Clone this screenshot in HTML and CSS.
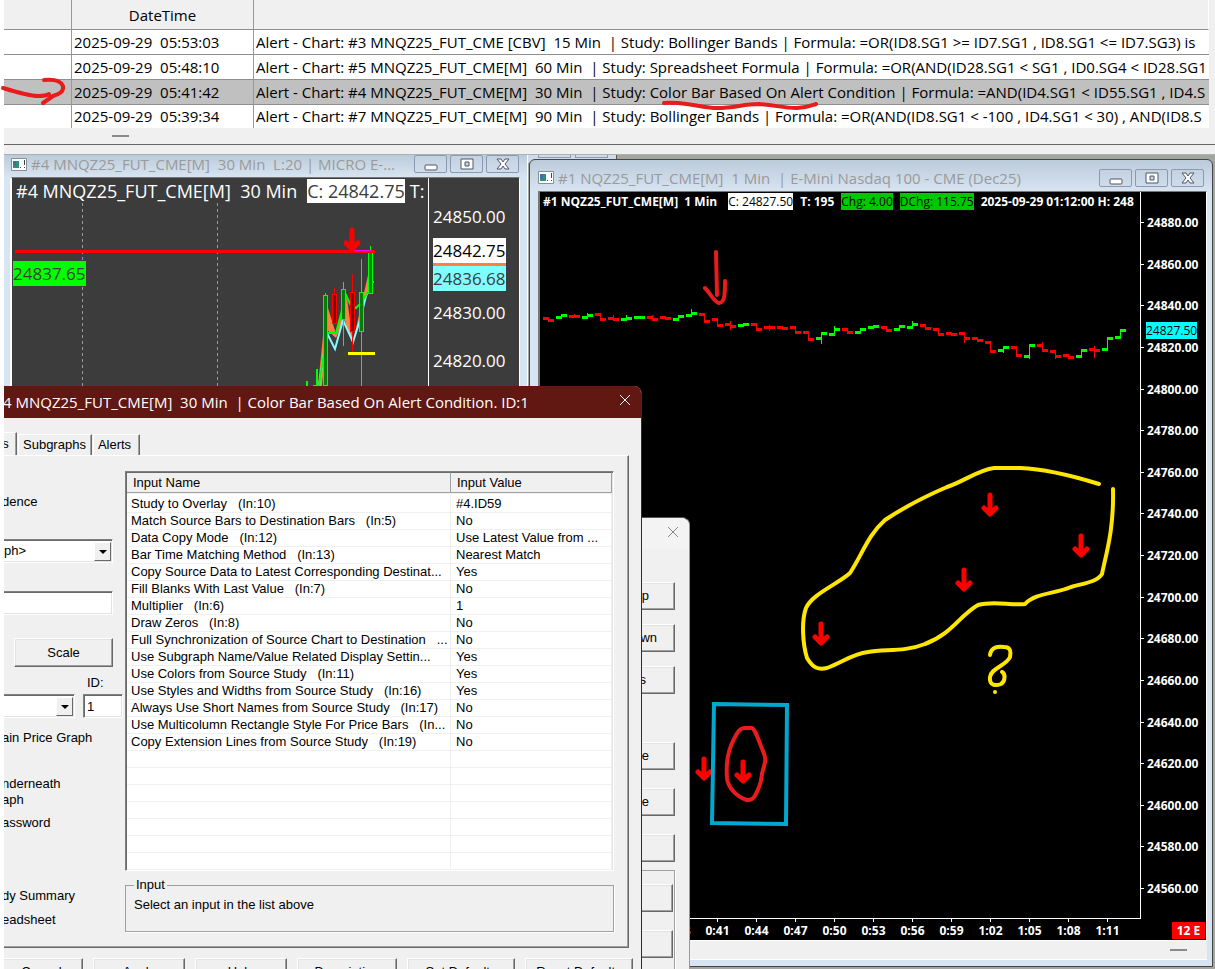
FILE: index.html
```html
<!DOCTYPE html>
<html lang="en">
<head>
    <meta charset="UTF-8">
    <meta name="viewport" content="width=device-width, initial-scale=1.0">
    <title>Alert Manager</title>
    <link rel="stylesheet" href="styles.css">
</head>
<body>

    <!-- Alert log -->
    <div class="alert-log">
        <table>
            <colgroup><col class="col-mark"><col class="col-date"><col></colgroup>
            <thead>
                <tr><th></th><th>DateTime</th><th></th></tr>
            </thead>
            <tbody>
                <tr><td></td><td>2025-09-29  05:53:03</td><td>Alert - Chart: #3 MNQZ25_FUT_CME [CBV]  15 Min  | Study: Bollinger Bands | Formula: =OR(ID8.SG1 &gt;= ID7.SG1 , ID8.SG1 &lt;= ID7.SG3) is</td></tr>
                <tr><td></td><td>2025-09-29  05:48:10</td><td>Alert - Chart: #5 MNQZ25_FUT_CME[M]  60 Min  | Study: Spreadsheet Formula | Formula: =OR(AND(ID28.SG1 &lt; SG1 , ID0.SG4 &lt; ID28.SG1</td></tr>
                <tr class="selected"><td></td><td>2025-09-29  05:41:42</td><td>Alert - Chart: #4 MNQZ25_FUT_CME[M]  30 Min  | Study: Color Bar Based On Alert Condition | Formula: =AND(ID4.SG1 &lt; ID55.SG1 , ID4.S</td></tr>
                <tr><td></td><td>2025-09-29  05:39:34</td><td>Alert - Chart: #7 MNQZ25_FUT_CME[M]  90 Min  | Study: Bollinger Bands | Formula: =OR(AND(ID8.SG1 &lt; -100 , ID4.SG1 &lt; 30) , AND(ID8.S</td></tr>
            </tbody>
        </table>
        <div class="log-scroll"><span class="thumb"></span></div>
    </div>

    <main class="desktop">

        <!-- Window partly hidden behind the charts -->
        <div class="back-window"><i></i><i></i></div>

        <!-- Chart #4 -->
        <section class="window window-4">
            <header class="title-bar">
                <svg class="win-icon" viewBox="0 0 16 13"><path fill="#fff" stroke="#8a8f96" d="M.5.5h15v12H.5z"/><path fill="#2f8f7d" d="M2 3h6v7H2z"/><path fill="#3b6fae" d="M2 3h3v4H2z"/><path fill="#444" d="M9 9h1v1H9zM13 2h1v5h-1zM13 9h1v1h-1z"/></svg>
                <h2>#4 MNQZ25_FUT_CME[M]  30 Min  L:20 | MICRO E-...</h2>
                <div class="win-buttons">
                    <button aria-label="Minimize"><svg viewBox="0 0 14 14"><rect x="1" y="8" width="12" height="5" rx="1"/></svg></button>
                    <button aria-label="Maximize"><svg viewBox="0 0 14 14"><path fill-rule="evenodd" d="M1 2h12v10H1zM5 5h4v4H5z"/></svg></button>
                    <button aria-label="Close"><svg viewBox="0 0 14 14"><path d="M1 2h4l2 3 2-3h4L9 7l4 5H9L7 9l-2 3H1l4-5z"/></svg></button>
                </div>
            </header>
            <div class="client client-4">
                <div class="plot">
                    <svg class="drawing">
                        <g transform="translate(-12 -178)">
                            <path stroke="#999" stroke-dasharray="3 3" d="M82.5 203v190M217.5 203v190"/>
                            <path fill="#ff8040" d="M318 386L324 326 328 308 336 334 343 305 347 298 353 342 361 306 371 262 373 276 362 310 353 345 344 318 336 338 327 330 322 386z"/>
                            <path class="line cyan" d="M319 386l8-53 8 16 8-29 10 22 7-22 6-24 7-15"/>
                            <path class="line lime" d="M313 386h6l8-53h9l10-38 5 11 5 2 6-6 8-14"/>
                            <path stroke="#0f0" stroke-width="2" d="M307 381v5M317 369v18"/>
                            <g id="candles"></g>
                            <path stroke="#f00" stroke-width="3" d="M15 251.500H375"/>
                            <path stroke="#f0f" d="M352 250.500h19"/>
                            <path stroke="#ff0" stroke-width="3" d="M348 353.500h27"/>
                            <path class="marker" d="M352 230v18M346 243l6 6 6-6"/>
                        </g>
                    </svg>
                    <div class="chart-info"><span>#4 MNQZ25_FUT_CME[M]  30 Min</span><span class="close-price">C: 24842.75</span><span>T:</span></div>
                    <span class="level">24837.65</span>
                </div>
                <div class="axis-4">
                    <span>24850.00</span>
                    <span class="last">24842.75</span>
                    <span class="avg">24836.68</span>
                    <span>24830.00</span>
                    <span>24820.00</span>
                </div>
            </div>
        </section>

        <!-- Chart #1 -->
        <section class="window window-1">
            <header class="title-bar">
                <svg class="win-icon" viewBox="0 0 16 13"><path fill="#fff" stroke="#8a8f96" d="M.5.5h15v12H.5z"/><path fill="#2f8f7d" d="M2 3h6v7H2z"/><path fill="#3b6fae" d="M2 3h3v4H2z"/><path fill="#444" d="M9 9h1v1H9zM13 2h1v5h-1zM13 9h1v1h-1z"/></svg>
                <h2>#1 NQZ25_FUT_CME[M]  1 Min  | E-Mini Nasdaq 100 - CME (Dec25)</h2>
                <div class="win-buttons">
                    <button aria-label="Minimize"><svg viewBox="0 0 14 14"><rect x="1" y="8" width="12" height="5" rx="1"/></svg></button>
                    <button aria-label="Maximize"><svg viewBox="0 0 14 14"><path fill-rule="evenodd" d="M1 2h12v10H1zM5 5h4v4H5z"/></svg></button>
                    <button aria-label="Close"><svg viewBox="0 0 14 14"><path d="M1 2h4l2 3 2-3h4L9 7l4 5H9L7 9l-2 3H1l4-5z"/></svg></button>
                </div>
            </header>
            <div class="client client-1">
                <div class="plot">
                    <svg class="drawing">
                        <g transform="translate(-540 -192)">
                            <g id="bars"></g>
                            <path class="marker" d="M990 495v18M984 508l6 6 6-6M1081 536v18M1075 549l6 6 6-6M964 570v18M958 583l6 6 6-6M821 624v18M815 637l6 6 6-6M704 759v18M698 772l6 6 6-6M743 762v18M737 775l6 6 6-6"/>
                        </g>
                    </svg>
                    <div class="chart-info"><span>#1 NQZ25_FUT_CME[M]  1 Min</span><span class="close-price">C: 24827.50</span><span>T: 195</span><span class="chg">Chg: 4.00</span><span class="chg">DChg: 115.75</span><span>2025-09-29 01:12:00 H: 248</span></div>
                </div>
                <div class="axis-1">
                    <span>24880.00</span><span>24860.00</span><span>24840.00</span><span>24820.00</span>
                    <span>24800.00</span><span>24780.00</span><span>24760.00</span><span>24740.00</span>
                    <span>24720.00</span><span>24700.00</span><span>24680.00</span><span>24660.00</span>
                    <span>24640.00</span><span>24620.00</span><span>24600.00</span><span>24580.00</span>
                    <span>24560.00</span>
                    <b class="last">24827.50</b>
                </div>
                <div class="time-axis">
                    <span>0:38</span><span>0:41</span><span>0:44</span><span>0:47</span><span>0:50</span><span>0:53</span><span>0:56</span><span>0:59</span><span>1:02</span><span>1:05</span><span>1:08</span><span>1:11</span>
                </div>
                <div class="corner"><span>12 E</span></div>
            </div>
            <div class="chart-scroll"><span class="thumb"></span></div>
        </section>

        <!-- Studies dialog behind -->
        <section class="dialog studies">
            <header><button class="close" aria-label="Close"><svg viewBox="0 0 12 12"><path d="M1 1l10 10M11 1L1 11"/></svg></button></header>
            <div class="studies-buttons">
                <button>Move Up</button>
                <button>Move Down</button>
                <button>Settings</button>
                <button class="gap">Remove</button>
                <button>Duplicate</button>
                <button aria-label="Options"></button>
                <div class="group">
                    <button aria-label="Save"></button>
                    <button aria-label="Load"></button>
                </div>
            </div>
        </section>

        <!-- Study settings dialog -->
        <section class="dialog settings">
            <header>
                <h2>4 MNQZ25_FUT_CME[M]  30 Min  | Color Bar Based On Alert Condition. ID:1</h2>
                <button class="close" aria-label="Close"><svg viewBox="0 0 12 12"><path d="M1 1l10 10M11 1L1 11"/></svg></button>
            </header>
            <nav class="tabs">
                <button class="active">s</button>
                <button>Subgraphs</button>
                <button>Alerts</button>
            </nav>
            <div class="tab-page">
                <div class="options">
                    <p class="precedence">dence</p>
                    <div class="combo combo-graph"><select aria-label="Graph"><option>ph&gt;</option></select><i></i></div>
                    <input class="name-box" type="text" aria-label="Short name">
                    <button class="scale">Scale</button>
                    <label class="id-label" for="study-id">ID:</label>
                    <div class="id-row">
                        <div class="combo"><select aria-label="Chart"><option></option></select><i></i></div>
                        <input id="study-id" type="text" value="1">
                    </div>
                    <p class="main-graph">ain Price Graph</p>
                    <p class="underneath">nderneath<br>aph</p>
                    <p class="password">assword</p>
                    <p class="summary">dy Summary</p>
                    <p class="sheet">eadsheet</p>
                </div>
                <div class="inputs">
                    <div class="list">
                        <table>
                            <colgroup><col class="col-name"><col class="col-value"><col></colgroup>
                            <thead><tr><th>Input Name</th><th>Input Value</th><th></th></tr></thead>
                            <tbody>
                                <tr><td>Study to Overlay   (In:10)</td><td>#4.ID59</td><td></td></tr>
                                <tr><td>Match Source Bars to Destination Bars   (In:5)</td><td>No</td><td></td></tr>
                                <tr><td>Data Copy Mode   (In:12)</td><td>Use Latest Value from ...</td><td></td></tr>
                                <tr><td>Bar Time Matching Method   (In:13)</td><td>Nearest Match</td><td></td></tr>
                                <tr><td>Copy Source Data to Latest Corresponding Destinat...</td><td>Yes</td><td></td></tr>
                                <tr><td>Fill Blanks With Last Value   (In:7)</td><td>No</td><td></td></tr>
                                <tr><td>Multiplier   (In:6)</td><td>1</td><td></td></tr>
                                <tr><td>Draw Zeros   (In:8)</td><td>No</td><td></td></tr>
                                <tr><td>Full Synchronization of Source Chart to Destination   ...</td><td>No</td><td></td></tr>
                                <tr><td>Use Subgraph Name/Value Related Display Settin...</td><td>Yes</td><td></td></tr>
                                <tr><td>Use Colors from Source Study   (In:11)</td><td>Yes</td><td></td></tr>
                                <tr><td>Use Styles and Widths from Source Study   (In:16)</td><td>Yes</td><td></td></tr>
                                <tr><td>Always Use Short Names from Source Study   (In:17)</td><td>No</td><td></td></tr>
                                <tr><td>Use Multicolumn Rectangle Style For Price Bars   (In...</td><td>No</td><td></td></tr>
                                <tr><td>Copy Extension Lines from Source Study   (In:19)</td><td>No</td><td></td></tr>
                                <tr><td></td><td></td><td></td></tr>
                                <tr><td></td><td></td><td></td></tr>
                                <tr><td></td><td></td><td></td></tr>
                                <tr><td></td><td></td><td></td></tr>
                                <tr><td></td><td></td><td></td></tr>
                                <tr><td></td><td></td><td></td></tr>
                                <tr><td></td><td></td><td></td></tr>
                            </tbody>
                        </table>
                    </div>
                    <fieldset>
                        <legend>Input</legend>
                        Select an input in the list above
                    </fieldset>
                </div>
            </div>
            <footer>
                <button>Cancel</button>
                <button>Apply</button>
                <button>Help</button>
                <button class="mid">Description</button>
                <button class="wide">Set Defaults</button>
                <button class="wide">Reset Defaults</button>
            </footer>
        </section>
    </main>

    <!-- Freehand pen notes -->
    <svg class="notes">
        <g class="pen red">
            <path d="M3 88C16 92 30 96 38 96c5 0 8 0 11-2M44 80c10-1 17 1 19 6 1 6-4 8-10 10l-10 7"/>
            <path d="M664 103c14-1 20 1 29 2 8 1 14 3 24 3 18 0 26-4 42-4 16 1 24 4 38 4 9 0 13-2 19-4"/>
            <path d="M716 252l1 43M705 288c6 6 9 14 14 15 6 0 6-10 6-22"/>
            <path d="M746 728c-6-1-9 5-12 11-6 11-8 26-7 39 1 10 10 19 20 22 7 1 9-6 12-13 3-6 2-11 4-17 3-10 3-12 0-19-5-12-8-22-11-23z"/>
        </g>
        <g class="pen yellow">
            <path d="M1099 484C1070 475 1045 469 1020 468L994 468C978 470 965 481 947 487C926 496 903 508 885 520C868 535 862 555 850 573C838 584 812 594 806 608C801 622 803 645 807 658C813 668 818 670 827 668C843 662 852 654 868 652C885 649 905 652 925 644C952 634 960 615 978 605C995 600 1010 606 1025 604C1035 593 1055 594 1071 587C1085 583 1097 582 1102 574C1106 554 1114 530 1113 489"/>
            <path d="M990 655c1-8 8-9 14-8 7 0 7 5 6 10-4 9-19 11-20 20-1 9 6 9 11 7 5-3 4-11 1-12"/>
            <path d="M995 692v0"/>
        </g>
        <path class="pen blue" d="M714 704l73 1-1 119-74-1z"/>
    </svg>

    <script>
        const NS = 'http://www.w3.org/2000/svg';

        function add(parent, tag, attrs) {
            const el = document.createElementNS(NS, tag);
            for (const key in attrs) el.setAttribute(key, attrs[key]);
            parent.appendChild(el);
        }

        // 1 minute bars: up/down, open, close, high, low (screen units)
        const bars = [
            'd,318,320', 'u,317,315', 'd,316,316,314', 'u,317,315,313', 'd,314,319', 'd,318,319,315', 'u,319,318,315',
            'u,317,317', 'd,317,319,315', 'd,317,318', 'u,319,316', 'u,315,313,309', 'd,314,321', 'd,319,325',
            'd,324,326,321,329', 'u,325,324', 'd,324,329', 'd,327,327,325,330', 'd,327,328', 'd,327,332',
            'd,332,339', 'u,338,333,333,343', 'u,334,329,326', 'd,329,332', 'u,332,329', 'u,327,326', 'd,327,330',
            'u,329,326', 'u,327,324,321', 'd,325,328', 'd,329,334', 'd,333,334', 'd,333,338,333,342', 'd,338,340',
            'd,342,351', 'u,350,347,347,352', 'd,347,355', 'u,356,345,345,358', 'd,345,350,342', 'd,351,356,351,358',
            'd,355,357', 'u,356,350', 'd,349,350,346,357', 'u,349,338', 'u,337,330'
        ];
        const barLayer = document.getElementById('bars');
        bars.forEach((bar, i) => {
            const [dir, ...v] = bar.split(',');
            const [open, close] = v.map(Number);
            const high = Number(v[2] || Math.min(open, close));
            const low = Number(v[3] || Math.max(open, close));
            const x = 543 + i * 13;
            const fill = dir === 'u' ? '#00ff00' : '#ff0000';
            add(barLayer, 'rect', { x: x, y: open - 1, width: 6, height: 3, fill });
            add(barLayer, 'rect', { x: x + 5, y: close - 1, width: 6, height: 3, fill });
            add(barLayer, 'rect', { x: x + 5, y: high, width: 1, height: low - high + 1, fill });
        });

        // 30 minute candles: x, top, bottom, high, low, up
        const candles = [
            [323, 295, 385, 293, 386, 1],
            [332, 294, 323, 288, 324, 0],
            [341, 289, 319, 282, 346, 1],
            [350, 292, 331, 274, 352, 0],
            [359, 292, 331, 259, 386, 1],
            [368, 252, 293, 246, 294, 1]
        ];
        const candleLayer = document.getElementById('candles');
        candles.forEach(([x, top, bottom, high, low, up]) => {
            const stroke = up ? '#00ff00' : '#ff0000';
            add(candleLayer, 'rect', { x: x + 2, y: high, width: 1, height: low - high, fill: stroke });
            add(candleLayer, 'rect', { x: x + 0.5, y: top + 0.5, width: 4, height: bottom - top, fill: up ? '#008000' : '#800000', stroke });
        });
    </script>
</body>
</html>
```
FILE: styles.css
```css
* {
    margin: 0;
    padding: 0;
    box-sizing: border-box;
}

body {
    position: relative;
    display: flex;
    flex-direction: column;
    height: 100vh;
    padding-left: 4px;
    overflow: hidden;
    background: #fff;
    color: #000;
    font-family: "Open Sans", "Noto Sans", sans-serif;
    font-size: 15px;
}

button,
input,
select {
    font: inherit;
    color: inherit;
    border-radius: 0;
}

table {
    width: 100%;
    table-layout: fixed;
    border-collapse: separate;
    border-spacing: 0;
}

h2 {
    font-weight: normal;
    white-space: pre;
}

/* Alert log */
.alert-log {
    height: 155px;
    flex: none;
    padding-right: 6px;
    background: #f0f0f0;
    border-bottom: 1px solid #a9b3ae;
}

.alert-log .col-mark {
    width: 68px;
}

.alert-log .col-date {
    width: 182px;
}

.alert-log th,
.alert-log td {
    height: 25px;
    padding: 0 2px;
    overflow: hidden;
    border-right: 1px solid #999;
    border-bottom: 1px solid #8f8f8f;
    white-space: pre;
    line-height: 24px;
}

.alert-log th {
    height: 30px;
    font-weight: normal;
}

.alert-log td {
    background: #fff;
}

.alert-log th:last-child,
.alert-log td:last-child {
    border-right: 0;
}

.alert-log th:last-child {
    border-right: 1px solid #fff;
}

.alert-log .selected td {
    background: #c0c0c0;
}

.alert-log tbody tr:last-child td {
    height: 23px;
    border-bottom: 0;
    line-height: 23px;
}

.log-scroll {
    height: 17px;
    margin-right: -6px;
    padding: 7px 108px;
    border-bottom: 1px solid #666;
}

.thumb {
    display: block;
    width: 17px;
    height: 2px;
    background: #8a8a8a;
}

/* Desktop and chart windows */
.desktop {
    position: relative;
    flex: 1;
    margin-left: -4px;
    border-left: 4px solid #fff;
    overflow: hidden;
    background: #a5a5a0;
}

.back-window {
    position: absolute;
    top: 0;
    left: 524px;
    width: 89px;
    height: 8px;
    display: flex;
    gap: 4px;
    padding-left: 10px;
    background: #cfdbe8;
    border-right: 1px solid #555;
}

.back-window i {
    width: 33px;
    height: 3px;
    border: solid #8b99b5;
    border-width: 0 1px 1px;
}

.window {
    position: absolute;
    display: flex;
    flex-direction: column;
    background: #d7e4f2;
}

.window-4 {
    top: 0;
    left: 0;
    width: 524px;
    height: 400px;
    padding: 0 7px 8px 5px;
    border-right: 1px solid #fff;
}

.window-1 {
    top: 4px;
    left: 525px;
    right: 2px;
    bottom: 2px;
    padding: 0 5px 6px 8px;
    border: 1px solid #444;
    border-radius: 6px 6px 0 0;
    background: linear-gradient(#bccbda, #d7e4f2 32px);
}

.title-bar {
    display: flex;
    align-items: center;
    gap: 4px;
    flex: none;
    color: #9a9a9a;
}

.window-4 .title-bar {
    height: 22px;
    margin: 0 -7px 0 -5px;
    padding: 0 8px 4px 7px;
    background: linear-gradient(#bccbda, #d7e4f2);
}

.window-1 .title-bar {
    height: 31px;
    padding-top: 4px;
    padding-right: 3px;
}

.title-bar h2 {
    flex: 1;
    min-width: 0;
    overflow: hidden;
    font-size: 15px;
    line-height: 20px;
}

.win-icon {
    width: 16px;
    height: 13px;
    flex: none;
}

.win-buttons {
    display: flex;
    gap: 3px;
}

.win-buttons button {
    display: flex;
    align-items: center;
    justify-content: center;
    width: 33px;
    height: 18px;
    background: linear-gradient(#c3d1e0, #cfdceb);
    border: 1px solid #8b99b5;
    border-radius: 2px;
}

.win-buttons svg {
    width: 14px;
    height: 14px;
    fill: #fff;
    stroke: #535666;
}

.client {
    flex: 1;
    min-height: 0;
    overflow: hidden;
    border: 1px solid #777;
    border-right-color: #fff;
    border-bottom-color: #fff;
    color: #fff;
}

.plot {
    position: relative;
    overflow: hidden;
    border-right: 1px solid #fff;
}

.drawing {
    position: absolute;
    inset: 0;
    width: 100%;
    height: 100%;
    fill: none;
}

.marker {
    stroke: #f00;
    stroke-width: 5;
    stroke-linecap: round;
    stroke-linejoin: round;
}

.line {
    stroke-width: 2;
}

.cyan {
    stroke: #80ffff;
}

.lime {
    stroke: #00ff00;
}

.chart-info {
    position: relative;
    display: flex;
    white-space: pre;
}

.client-4 {
    display: flex;
    margin-left: 1px;
    border-left: 2px solid #fff;
    background: #3c3c3c;
}

.client-4 .plot {
    flex: 1;
}

.client-4 .chart-info {
    gap: 5px;
    padding: 1px 4px;
    font-size: 18px;
    line-height: 24px;
}

.client-4 .chart-info span:first-child {
    margin-right: 5px;
}

.close-price {
    background: #fff;
    color: #3c3c3c;
}

.level {
    position: absolute;
    top: 83px;
    left: 1px;
    background: #00ff00;
    color: #3c3c3c;
    font-size: 17px;
    line-height: 25px;
}

.axis-4 {
    display: flex;
    flex-direction: column;
    align-items: flex-start;
    width: 90px;
    padding: 26px 0 0 4px;
    font-size: 17px;
    line-height: 25px;
}

.axis-4 .last {
    margin-top: 9px;
    background: #fff;
    color: #000;
}

.axis-4 .avg {
    margin-bottom: 9px;
    background: #80ffff;
    border-top: 3px solid #ff8040;
    color: #3c3c3c;
}

.axis-4 span:last-child {
    margin-top: 23px;
}

.client-1 {
    display: grid;
    grid-template-columns: 1fr 65px;
    grid-template-rows: 1fr 21px;
    border-left-width: 2px;
    background: #000;
    font-size: 12px;
    font-weight: bold;
}

.client-1 .plot {
    border-bottom: 1px solid #fff;
}

.client-1 .chart-info {
    gap: 7px;
    padding: 1px 3px;
    line-height: 17px;
}

.client-1 .close-price {
    margin-left: 4px;
    color: #000;
    font-weight: normal;
}

.chg {
    background: #00c800;
    color: #000;
    font-weight: normal;
}

.axis-1 {
    position: relative;
    display: flex;
    flex-direction: column;
    justify-content: space-between;
    padding: 22px 0;
    line-height: 17px;
}

.axis-1 span {
    display: flex;
    align-items: center;
    gap: 3px;
}

.axis-1 span::before {
    content: "";
    width: 3px;
    height: 1px;
    background: #fff;
}

.axis-1 .last {
    position: absolute;
    top: 130px;
    left: 5px;
    background: #00ffff;
    color: #000;
    font-weight: normal;
}

.time-axis {
    display: flex;
    justify-content: flex-end;
    padding-right: 14px;
}

.time-axis span {
    width: 39px;
    text-align: center;
    line-height: 18px;
}

.time-axis span::before {
    content: "";
    display: block;
    width: 1px;
    height: 3px;
    margin: 0 auto;
    background: #fff;
}

.corner {
    display: flex;
    justify-content: flex-end;
    padding: 3px 1px 1px 0;
}

.corner span {
    width: 33px;
    background: #f00;
    text-align: center;
    line-height: 17px;
}

.chart-scroll {
    display: flex;
    justify-content: flex-end;
    align-items: center;
    height: 19px;
    padding-right: 20px;
    background: #f0f0f0;
    border-bottom: 1px solid #fff;
}

/* Dialogs */
.dialog {
    position: absolute;
    background: #f0f0f0;
    font-family: "Liberation Sans", Arial, sans-serif;
    font-size: 13px;
    line-height: 16px;
}

.dialog header {
    display: flex;
    align-items: center;
    height: 31px;
}

.dialog button {
    height: 28px;
    background: #f0f0f0;
    border: 1px solid;
    border-color: #fff #696969 #696969 #fff;
    box-shadow: inset -1px -1px #a0a0a0, inset 1px 1px #e3e3e3;
}

.dialog .close {
    width: 32px;
    background: none;
    border: 0;
    box-shadow: none;
}

.close svg {
    width: 12px;
    height: 12px;
    fill: none;
    stroke: currentColor;
}

.studies {
    top: 362px;
    left: 500px;
    width: 186px;
    height: 500px;
    border-top: 1px solid #555;
    border-right: 1px solid #999;
    border-radius: 0 8px 0 0;
}

.studies header {
    justify-content: flex-end;
    background: #f3f3f3;
    border-radius: 0 8px 0 0;
    color: #888;
}

.studies-buttons {
    display: flex;
    flex-direction: column;
    align-items: flex-end;
    gap: 14px;
    padding: 33px 14px 0 0;
}

.studies-buttons button {
    width: 96px;
    padding-right: 25px;
    text-align: right;
}

.studies-buttons button:nth-child(2) {
    padding-right: 17px;
}

.studies-buttons button:nth-child(3) {
    padding-right: 28px;
}

.studies-buttons .gap {
    margin-top: 34px;
}

.studies-buttons button:nth-child(n+5) {
    margin-top: 4px;
}

.studies-buttons .group {
    display: flex;
    flex-direction: column;
    align-items: flex-end;
    gap: 18px;
    width: 120px;
    margin-top: -6px;
    padding: 13px 1px 11px;
    border: 1px solid #a0a0a0;
    box-shadow: 1px 1px #fff;
}

.studies-buttons .group button {
    margin-top: 0;
}

.settings {
    top: 231px;
    left: -4px;
    width: 642px;
    border-right: 1px solid #611712;
    border-radius: 0 8px 0 0;
}

.settings header {
    height: 32px;
    padding-left: 3px;
    background: #611712;
    border-radius: 0 7px 0 0;
    color: #fff;
}

.settings h2 {
    flex: 1;
    font-family: "Open Sans", "Noto Sans", sans-serif;
    font-size: 15px;
}

.tabs {
    display: flex;
    gap: 1px;
    padding-top: 14px;
}

.dialog .tabs button {
    height: 21px;
    margin-top: 2px;
    padding: 0 5px 0 4px;
    border-bottom: 0;
    box-shadow: inset -1px 0 #a0a0a0;
}

.dialog .tabs .active {
    width: 17px;
    height: 23px;
    margin-top: 0;
    padding: 0 6px 0 0;
}

.dialog .tabs button:last-child {
    padding-right: 8px;
}

.tab-page {
    display: flex;
    width: 629px;
    height: 493px;
    border: 1px solid;
    border-color: #fff #696969 #696969 transparent;
    box-shadow: inset -1px -1px #a0a0a0;
}

.options {
    display: flex;
    flex-direction: column;
    width: 124px;
    padding: 38px 2px 0 1px;
}

.combo {
    display: flex;
    height: 24px;
    padding: 1px;
    background: #fff;
    border: 1px solid;
    border-color: #808080 #fff #fff #808080;
    box-shadow: inset 0 1px #696969, inset -1px -1px #e3e3e3;
}

.combo select {
    flex: 1;
    min-width: 0;
    padding-left: 2px;
    appearance: none;
    background: none;
    border: 0;
}

.combo i {
    display: flex;
    align-items: center;
    justify-content: center;
    width: 17px;
    margin-top: 1px;
    background: #f0f0f0;
    border: 1px solid;
    border-color: #fff #696969 #696969 #fff;
    pointer-events: none;
}

.combo i::before {
    content: "";
    border: 4px solid transparent;
    border-top-color: #000;
    border-bottom: 0;
}

.options input {
    height: 24px;
    padding: 0 3px;
    border: 1px solid;
    border-color: #808080 #fff #fff #808080;
    box-shadow: inset 1px 1px #696969, inset -1px -1px #e3e3e3;
}

.combo-graph,
.name-box {
    width: 113px;
    margin-left: -2px;
}

.combo-graph {
    margin-top: 29px;
}

.options .name-box {
    margin-top: 28px;
}

.options .scale {
    width: 99px;
    height: 29px;
    margin: 23px 0 0 12px;
}

.id-label {
    margin: 8px 0 3px 85px;
}

.id-row {
    display: flex;
    justify-content: space-between;
}

.id-row .combo {
    width: 75px;
    margin-left: -2px;
}

.id-row input {
    width: 40px;
}

.main-graph {
    margin-top: 12px;
}

.underneath {
    margin-top: 30px;
}

.password {
    margin-top: 7px;
}

.summary {
    margin-top: 57px;
}

.sheet {
    margin-top: 8px;
}

.inputs {
    width: 489px;
    padding-top: 15px;
}

.list {
    height: 400px;
    padding: 0 1px;
    overflow: hidden;
    background: #fff;
    border: 1px solid;
    border-color: #808080 #fff #fff #808080;
    box-shadow: inset 1px 1px #696969, inset -1px -1px #e3e3e3;
}

.col-name {
    width: 324px;
}

.col-value {
    width: 161px;
}

.list th {
    height: 21px;
    padding: 1px 6px 0;
    background: #f0f0f0 padding-box;
    border-top: 1px solid #696969;
    border-right: 1px solid #a0a0a0;
    border-bottom: 1px solid #a0a0a0;
    font-weight: normal;
    text-align: left;
}

.list td {
    height: 17px;
    padding: 0 4px;
    overflow: hidden;
    border-right: 1px solid #f0f0f0;
    border-bottom: 1px solid #f0f0f0;
    white-space: pre;
}

.list tbody tr:first-child td {
    height: 20px;
    padding-top: 2px;
    border-top: 1px solid #f0f0f0;
}

.list td:nth-child(2) {
    padding-left: 5px;
}

.list td:last-child,
.list th:last-child {
    padding: 0;
    border-right: 0;
}

fieldset {
    height: 55px;
    margin-top: 6px;
    padding: 4px 8px;
    border: 1px solid #a0a0a0;
    box-shadow: 1px 1px #fff;
}

legend {
    padding: 0 2px;
}

.settings footer {
    display: flex;
    gap: 10px;
    padding-top: 10px;
}

.settings footer button {
    width: 92px;
}

.settings footer button:first-child {
    width: 83px;
}

.settings footer .mid {
    width: 100px;
}

.settings footer .wide {
    width: 108px;
}

/* Pen notes over everything */
.notes {
    position: absolute;
    inset: 0;
    width: 100%;
    height: 100%;
    pointer-events: none;
}

.pen {
    fill: none;
    stroke-width: 4;
    stroke-linecap: round;
    stroke-linejoin: round;
}

.red {
    stroke: #e81c1c;
}

.yellow {
    stroke: #ffe600;
}

.blue {
    stroke: #00a8d0;
    stroke-linejoin: miter;
}
```
